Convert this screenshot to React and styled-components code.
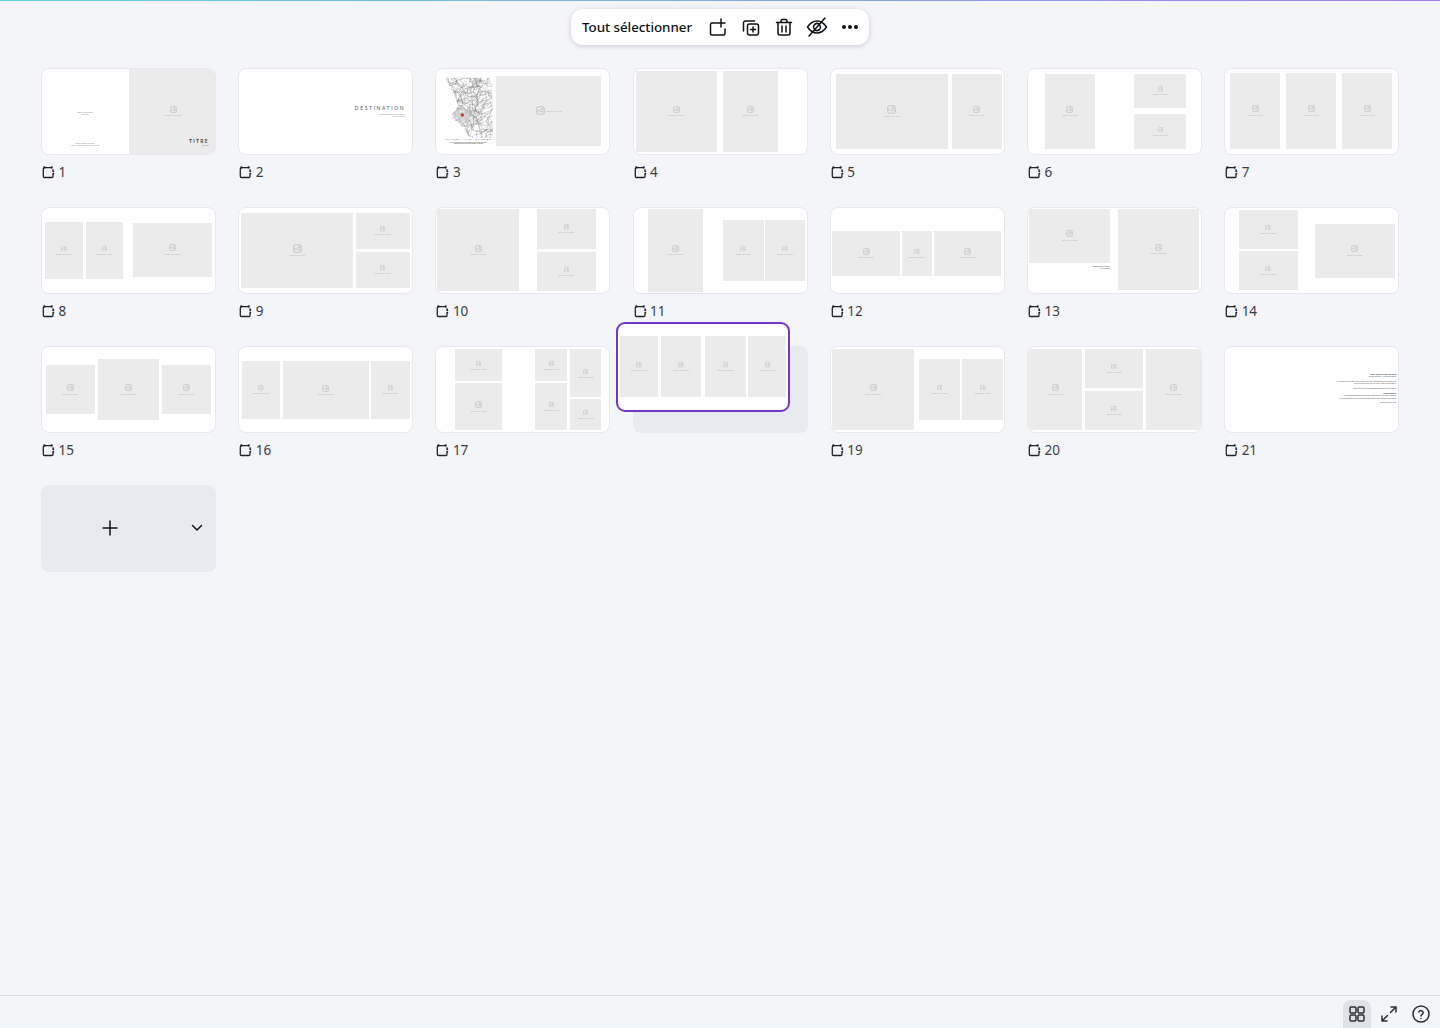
import React from "react";
import styled, { createGlobalStyle } from "styled-components";

const Global = createGlobalStyle`
  html, body { margin: 0; padding: 0; background: #f4f5f9; }
  body { font-family: "Noto Sans", "Liberation Sans", sans-serif; color: #0e1318; }
`;

const Page = styled.div`
  width: 1440px;
  height: 1028px;
  display: flex;
  flex-direction: column;
  overflow: hidden;
  background: #f4f5f9;
`;
const TopLine = styled.div`
  height: 1px;
  flex: none;
  background: linear-gradient(90deg, #62d6d6 0%, #7fb0e4 45%, #a47fe6 100%);
`;
const ToolbarRow = styled.div`
  display: flex;
  justify-content: center;
  padding-top: 8px;
  flex: none;
`;
const Toolbar = styled.div`
  height: 36px;
  width: 298px;
  box-sizing: border-box;
  padding: 0 9px 0 11px;
  display: flex;
  align-items: center;
  background: #fff;
  border-radius: 12px;
  box-shadow: 0 1px 5px rgba(40, 50, 70, 0.2);
`;
const SelectAll = styled.span`
  font-size: 13.4px;
  font-weight: 500;
  white-space: nowrap;
  letter-spacing: -0.05px;
  margin-right: 16.5px;
`;
const ToolIcon = styled.svg`
  flex: none;
  margin-right: ${(p) => p.$gap}px;
  fill: none;
  stroke: #0e1318;
  stroke-width: 1.5;
  stroke-linecap: round;
  stroke-linejoin: round;
`;
const Main = styled.main`
  flex: 1;
  padding: 22.5px 40px 0 41px;
`;
const Grid = styled.div`
  display: grid;
  grid-template-columns: repeat(7, 175px);
  column-gap: 22.2px;
  row-gap: 25.15px;
  align-items: start;
`;
const Cell = styled.div`
  position: relative;
  height: 114px;
`;
const Thumb = styled.div`
  position: relative;
  width: 175px;
  height: 87px;
  box-sizing: border-box;
  background: #fff;
  border: 1px solid #e7e9ef;
  border-radius: 8px;
  overflow: hidden;
`;
const Ghost = styled.div`
  width: 175px;
  height: 87px;
  border-radius: 8px;
  background: #e8eaef;
`;
const DragCard = styled.div`
  position: absolute;
  left: -16.5px;
  top: -24px;
  width: 174px;
  height: 90.5px;
  box-sizing: border-box;
  background: #fff;
  border: 2px solid #7237c4;
  border-radius: 9px;
  overflow: hidden;
`;
const Photo = styled.div`
  position: absolute;
  left: ${(p) => p.$x}px;
  top: ${(p) => p.$y}px;
  width: ${(p) => p.$w}px;
  height: ${(p) => p.$h}px;
  background: #ebebeb;
  display: flex;
  flex-direction: ${(p) => (p.$row ? "row" : "column")};
  align-items: center;
  justify-content: center;
  gap: 1.5px;
`;
const PhotoLabel = styled.span`
  font-size: 1.6px;
  line-height: 2px;
  color: #b2b2b2;
  white-space: nowrap;
`;
const PhotoIcon = styled.svg`
  flex: none;
  fill: none;
  stroke: #b4b4b4;
  stroke-width: 1.8;
`;
const SlideText = styled.div`
  position: absolute;
  left: ${(p) => p.$x}px;
  top: ${(p) => p.$y}px;
  width: ${(p) => p.$w}px;
  text-align: ${(p) => p.$align || "center"};
  font-family: "Lato", "Liberation Sans", sans-serif;
  font-size: ${(p) => p.$size}px;
  line-height: ${(p) => p.$lh || p.$size}px;
  letter-spacing: ${(p) => p.$track || 0}px;
  font-weight: ${(p) => p.$weight || 400};
  color: ${(p) => p.$color || "#8c8c8c"};
  white-space: nowrap;
`;
const MapDrawing = styled.svg`
  position: absolute;
  left: 6px;
  top: 7px;
  width: 52px;
  height: 66px;
`;
const Label = styled.div`
  display: flex;
  align-items: center;
  gap: 3.5px;
  height: 20px;
  margin-top: 7.5px;
  font-size: 13.5px;
  color: #3a3e45;
`;
const PageGlyph = styled.svg`
  flex: none;
  margin-left: 1px;
  fill: none;
  stroke: #20242a;
`;
const AddCard = styled.button`
  width: 175px;
  height: 87px;
  padding: 0 13px 0 60.5px;
  border: 0;
  border-radius: 8px;
  background: #e9eaef;
  display: flex;
  align-items: center;
  justify-content: space-between;
  color: #0e1318;
`;
const Footer = styled.footer`
  flex: none;
  height: 32px;
  border-top: 1px solid #dcdee3;
  display: flex;
  align-items: flex-end;
  justify-content: flex-end;
  padding-right: 9px;
`;
const FootButton = styled.div`
  width: ${(p) => p.$w}px;
  height: 28px;
  margin-right: ${(p) => p.$gap || 0}px;
  display: flex;
  align-items: center;
  justify-content: center;
  border-radius: 8px 8px 0 0;
  background: ${(p) => (p.$active ? "#dfe1e6" : "transparent")};
`;
const FootIcon = styled.svg`
  fill: none;
  stroke: #2c3036;
  stroke-width: 1.5;
  stroke-linecap: round;
  stroke-linejoin: round;
`;

function iconSize(w, h) {
  if (w >= 100 && h > 60) return 9;
  if (w >= 45 && h >= 45) return 7;
  return 5.5;
}

const Placeholder = ({ r, row }) => {
  const s = row ? 9 : iconSize(r[2], r[3]);
  return (
    <Photo $x={r[0]} $y={r[1]} $w={r[2]} $h={r[3]} $row={row}>
      <PhotoIcon width={s} height={s} viewBox="0 0 24 24">
        <rect x="2" y="2" width="20" height="20" rx="4" />
        <path d="M2 16l6-6 5 6 4-3 5 5" />
        <circle cx="16" cy="8" r="2" />
      </PhotoIcon>
      {r[2] > 28 && <PhotoLabel>Déposez votre image</PhotoLabel>}
    </Photo>
  );
};

function roads() {
  let seed = 7;
  const rnd = () => {
    seed = (seed * 1664525 + 1013904223) % 4294967296;
    return seed / 4294967296;
  };
  const out = [];
  for (let i = 0; i < 280; i++) {
    let x = rnd() * 52;
    let y = rnd() * 64;
    let a = rnd() * 6.28;
    let d = `M${x.toFixed(1)} ${y.toFixed(1)}`;
    const n = 3 + Math.floor(rnd() * 5);
    for (let k = 0; k < n; k++) {
      a += (rnd() - 0.5) * 1.5;
      x += Math.cos(a) * (1.5 + rnd() * 3);
      y += Math.sin(a) * (1.5 + rnd() * 3);
      d += `L${x.toFixed(1)} ${y.toFixed(1)}`;
    }
    out.push(d);
  }
  return out;
}
const ROADS = roads();

const CityMap = () => (
  <MapDrawing viewBox="0 0 52 66">
    <defs>
      <clipPath id="city-outline">
        <path d="M3 1.700L49.700 1.700L51.300 61.700L28 61.700L18 48.300L8 40L16.300 30L13 20Z" />
      </clipPath>
    </defs>
    <g clipPath="url(#city-outline)" fill="none" stroke="#555" strokeWidth="0.3" opacity="0.85">
      {ROADS.map((d, i) => (
        <path key={i} d={d} />
      ))}
    </g>
    <path d="M10 39l7-7 9 1 4 7-5 7-8-1z" fill="#c9c9c9" opacity="0.55" />
    <circle cx="20.300" cy="39" r="1.700" fill="#c5392f" />
  </MapDrawing>
);

const SLIDES = [
  { id: 1, rects: [[87, 0, 88, 85]], kind: "title" },
  { id: 2, rects: [], kind: "destination" },
  { id: 3, rects: [[60, 7, 105, 70]], kind: "map" },
  { id: 4, rects: [[2, 2, 81, 81], [89.5, 2, 54.5, 81]] },
  { id: 5, rects: [[5, 5, 112, 75], [121, 5, 50, 75]] },
  { id: 6, rects: [[17, 5, 50, 75], [106.5, 5, 52, 34], [106.5, 45, 52, 35]] },
  { id: 7, rects: [[5, 4, 50, 76], [61, 4, 50, 76], [117, 4, 50, 76]] },
  { id: 8, rects: [[3, 14, 37.5, 57], [43.5, 14, 37.5, 57], [91, 15, 79, 54]] },
  { id: 9, rects: [[2, 5, 112, 75], [116.5, 5, 54, 36], [116.5, 44, 54, 36]] },
  { id: 10, rects: [[1, 1.5, 82, 82], [100.5, 1.5, 59, 39.5], [100.5, 44, 59, 39.5]] },
  { id: 11, rects: [[14, 1, 55, 83], [89, 12, 41, 61], [131.5, 12, 40, 61]] },
  { id: 12, rects: [[1.5, 23, 67.5, 45], [71, 23, 30, 45], [103, 23, 67.5, 45]] },
  { id: 13, rects: [[1.5, 1, 81, 54], [90, 1, 81.5, 81]], kind: "caption" },
  { id: 14, rects: [[13.5, 2, 59, 39], [13.5, 43, 59, 39], [89.5, 16, 80, 54]] },
  { id: 15, rects: [[4, 18, 48.5, 49], [55.5, 12, 61, 61.5], [120, 18, 48.5, 49]] },
  { id: 16, rects: [[2.5, 14, 38.5, 58], [43.5, 14, 86.5, 58], [132, 14, 38.5, 58]] },
  { id: 17, rects: [[18.5, 2.5, 47.5, 32], [18.5, 36, 47.5, 47], [99, 2.5, 32, 32], [99, 36, 32, 47], [133.5, 2.5, 31.5, 48], [133.5, 52, 31.5, 31]] },
  { id: 18, dragged: true, rects: [[2, 12.7, 37.7, 60.7], [42.7, 12.7, 40.3, 60.7], [87, 12.7, 40.7, 60.7], [130.4, 12.7, 37.6, 60.7]] },
  { id: 19, rects: [[1.7, 2, 81.3, 81], [88.3, 12, 40.7, 61], [131.7, 12, 40.7, 61]] },
  { id: 20, rects: [[0, 2, 54.5, 81], [57, 2, 58.5, 39], [57, 44, 58.5, 39], [118, 2, 55.5, 81]] },
  { id: 21, rects: [], kind: "notes" },
];

const NOTES = [
  [26, "Merci d'avoir voyagé avec nous", 700, "#222"],
  [28.7, "Crédits photos · Mentions légales", 400, "#555"],
  [33, "Ce carnet de voyage a été réalisé avec soin, photographies et textes ont", 400, "#555"],
  [35.7, "Pour en savoir plus sur les lieux visités, consultez le", 400, "#555"],
  [40, "Retrouvez nos autres destinations dans la collection", 400, "#555"],
  [45, "Nous contacter", 700, "#222"],
  [47.7, "Pour toute question concernant cette édition, écrivez à l'équipe", 400, "#555"],
  [50, "Les informations de ce guide sont données à titre indicatif seulement", 400, "#555"],
  [54.7, "Bonne route à vous", 400, "#555"],
];

const Extras = ({ kind }) => {
  if (kind === "title")
    return (
      <>
        <SlideText $x={27} $y={42} $w={32} $size={1.7} $lh={2.6}>
          Texte de présentation<br />sous-titre
        </SlideText>
        <SlideText $x={18} $y={74} $w={50} $size={1.5} $lh={2.2}>
          Édition originale · Tous droits<br />réservés, reproduction interdite sans accord
        </SlideText>
        <SlideText $x={130} $y={70.5} $w={37} $align="right" $size={5} $track={1.3} $color="#444" $weight={700}>
          TITRE
        </SlideText>
        <SlideText $x={130} $y={76} $w={37} $align="right" $size={1.7}>
          sous-titre
        </SlideText>
      </>
    );
  if (kind === "destination")
    return (
      <>
        <SlideText $x={100} $y={37} $w={66} $align="right" $size={5} $track={1.6} $color="#555">
          DESTINATION
        </SlideText>
        <SlideText $x={110} $y={44} $w={56} $align="right" $size={1.7} $lh={2.2}>
          Description courte de la destination<br />lieu, pays et dates
        </SlideText>
      </>
    );
  if (kind === "map")
    return (
      <>
        <CityMap />
        <SlideText $x={6} $y={69} $w={52} $size={2.3} $track={0.55} $color="#555">
          CHARTRE · VILLE · QUARTIER
        </SlideText>
        <SlideText $x={6} $y={73} $w={52} $size={1.5} $lh={1.8} $color="#444">
          Texte de légende pour la carte de la ville et ses quartiers,<br />notes et références du plan affiché ci-dessus
        </SlideText>
      </>
    );
  if (kind === "caption")
    return (
      <SlideText $x={40} $y={57.5} $w={42} $align="right" $size={2} $lh={2.2} $color="#444">
        Légende de la photo<br />lieu et date
      </SlideText>
    );
  if (kind === "notes")
    return NOTES.map(([y, t, w, c]) => (
      <SlideText key={y} $x={60} $y={y} $w={111} $align="right" $size={1.9} $lh={2.2} $weight={w} $color={c}>
        {t}
      </SlideText>
    ));
  return null;
};

const Glyph = () => (
  <PageGlyph width="13" height="13" viewBox="0 0 13 13">
    <path d="M2.500 1.700H9.500M11 3.300V4.800M11 8.200V10.500a1 1 0 0 1-1 1H2.500a1.200 1.200 0 0 1-1.200-1.200V3a1.200 1.200 0 0 1 1.200-1.300" strokeWidth="1.3" />
    <circle cx="2.400" cy="1.500" r="1.150" fill="#20242a" stroke="none" />
    <circle cx="9.700" cy="1.500" r="1.150" fill="#20242a" stroke="none" />
    <circle cx="11.300" cy="5.300" r="1" fill="#20242a" stroke="none" />
    <circle cx="11.300" cy="7.700" r="1" fill="#20242a" stroke="none" />
  </PageGlyph>
);

const Slide = ({ s }) => {
  if (s.dragged)
    return (
      <Cell>
        <Ghost />
        <DragCard>
          {s.rects.map((r, i) => (
            <Placeholder key={i} r={r} />
          ))}
        </DragCard>
      </Cell>
    );
  return (
    <Cell>
      <Thumb>
        {s.rects.map((r, i) => (
          <Placeholder key={i} r={r} row={s.kind === "map"} />
        ))}
        <Extras kind={s.kind} />
      </Thumb>
      <Label>
        <Glyph />
        {s.id}
      </Label>
    </Cell>
  );
};

export default function App() {
  return (
    <Page>
      <Global />
      <TopLine />
      <ToolbarRow>
        <Toolbar>
          <SelectAll>Tout sélectionner</SelectAll>
          <ToolIcon width="18" height="18" viewBox="0 0 18 18" $gap={15}>
            <path d="M7 5H3a1.500 1.500 0 0 0-1.500 1.500v9A1.500 1.500 0 0 0 3 17h11.500a1.500 1.500 0 0 0 1.500-1.500V11" />
            <path d="M12 1v8M8 5h8" />
          </ToolIcon>
          <ToolIcon width="18" height="18" viewBox="0 0 18 18" $gap={15.5}>
            <path d="M12.500 3H3.500a2 2 0 0 0-2 2v8" />
            <rect x="5.500" y="6" width="11" height="11" rx="2" />
            <path d="M11 9v5M8.500 11.500h5" />
          </ToolIcon>
          <ToolIcon width="18" height="18" viewBox="0 0 18 18" $gap={12.5}>
            <path d="M1.500 4.500h15M6 4.500V3a1.500 1.500 0 0 1 1.500-1.500h3A1.500 1.500 0 0 1 12 3v1.500" />
            <path d="M3 4.500V15a2 2 0 0 0 2 2h8a2 2 0 0 0 2-2V4.500M7 8v6M11 8v6" />
          </ToolIcon>
          <ToolIcon width="22" height="20" viewBox="0 0 22 20" $gap={13}>
            <path d="M1.500 10C4.500 5.500 8 4 11 4s6.500 1.500 9.500 6c-3 4.500-6.500 6-9.500 6S4.500 14.500 1.500 10z" />
            <path d="M8 11.500a3.500 3.500 0 0 1 5-4.500M14 8.500a3.500 3.500 0 0 1-5 4.500M19 1L3 19" />
          </ToolIcon>
          <svg width="18" height="6" viewBox="0 0 18 6">
            <circle cx="3" cy="3" r="2" fill="#0e1318" />
            <circle cx="9" cy="3" r="2" fill="#0e1318" />
            <circle cx="15" cy="3" r="2" fill="#0e1318" />
          </svg>
        </Toolbar>
      </ToolbarRow>
      <Main>
        <Grid>
          {SLIDES.map((s) => (
            <Slide key={s.id} s={s} />
          ))}
          <AddCard>
            <FootIcon width="16" height="16" viewBox="0 0 16 16">
              <path d="M8 1v14M1 8h14" stroke="#0e1318" />
            </FootIcon>
            <FootIcon width="12" height="8" viewBox="0 0 12 8">
              <path d="M1.500 1.500L6 6l4.500-4.500" stroke="#0e1318" />
            </FootIcon>
          </AddCard>
        </Grid>
      </Main>
      <Footer>
        <FootButton $active $w={28} $gap={5.5}>
          <FootIcon width="16" height="16" viewBox="0 0 16 16">
            <rect x="1" y="1" width="6" height="6" rx="1.200" />
            <rect x="9" y="1" width="6" height="6" rx="1.200" />
            <rect x="1" y="9" width="6" height="6" rx="1.200" />
            <rect x="9" y="9" width="6" height="6" rx="1.200" />
          </FootIcon>
        </FootButton>
        <FootButton $w={24} $gap={10.5}>
          <FootIcon width="16" height="16" viewBox="0 0 16 16">
            <path d="M9.500 6.500L15 1M10 1h5v5M6.500 9.500L1 15M1 10v5h5" />
          </FootIcon>
        </FootButton>
        <FootButton $w={20}>
          <FootIcon width="18" height="18" viewBox="0 0 18 18" strokeWidth="1.3">
            <circle cx="9" cy="9" r="8" />
            <path d="M6.800 7a2.300 2.300 0 0 1 4.400.7c0 1.500-2.200 1.800-2.200 3.300M9 13.500v.1" />
          </FootIcon>
        </FootButton>
      </Footer>
    </Page>
  );
}
